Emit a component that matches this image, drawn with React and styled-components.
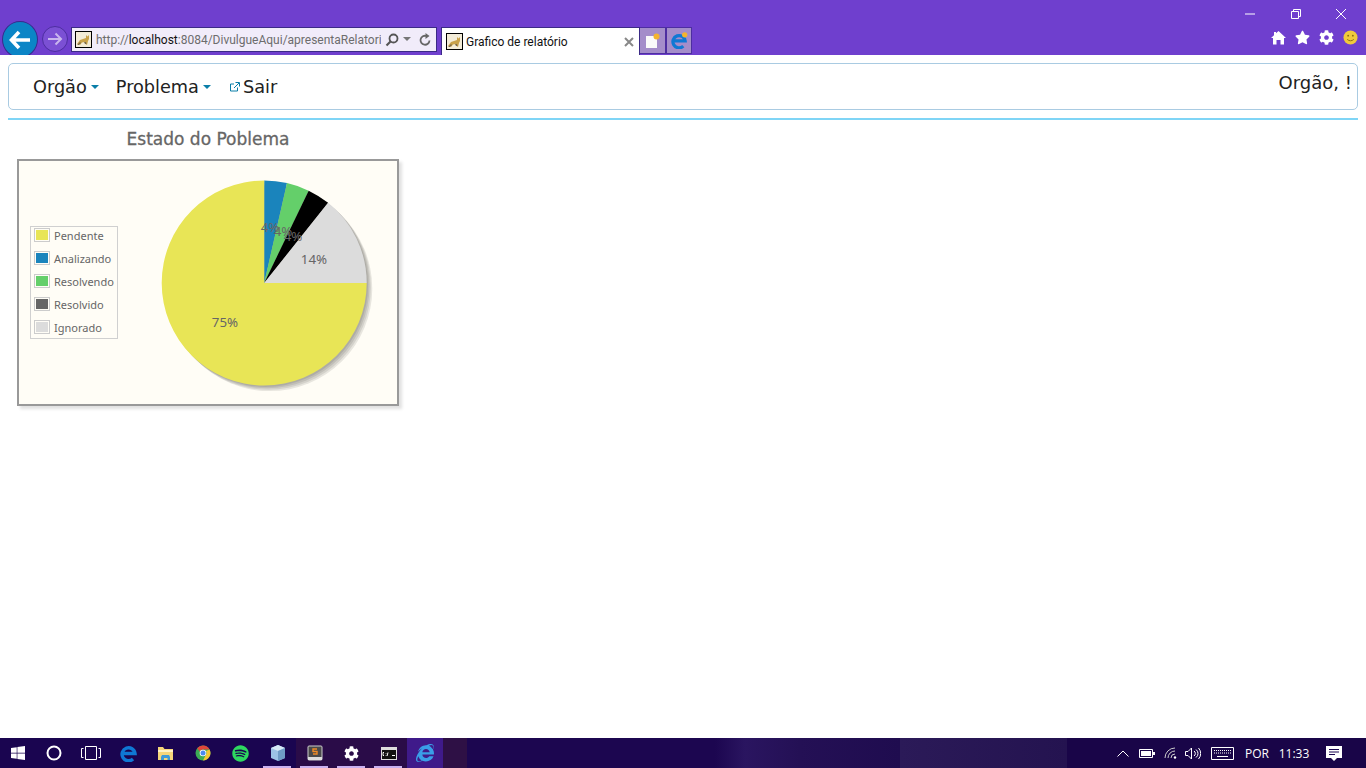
import React from 'react';
import styled, { createGlobalStyle } from 'styled-components';
import { FaCog, FaStar, FaSpotify, FaInternetExplorer, FaWindows } from 'react-icons/fa';

const GlobalStyle = createGlobalStyle`
  html, body { margin: 0; padding: 0; height: 100%; background: #fff; }
  body { font-family: "DejaVu Sans", sans-serif; overflow: hidden; }
`;

const Screen = styled.div`
  display: flex;
  flex-direction: column;
  height: 768px;
  width: 1366px;
  overflow: hidden;
`;

/* barra do navegador */
const BrowserBar = styled.header`
  display: flex;
  justify-content: space-between;
  height: 55px;
  flex: none;
  background: #6f3fce;
  overflow: hidden;
`;

const NavGroup = styled.div`
  display: flex;
  align-items: flex-start;
  padding: 21px 0 0 2px;
`;

const BackButton = styled.div`
  box-sizing: border-box;
  width: 36px;
  height: 37px;
  border-radius: 50%;
  background: #0b85c6;
  border: 1px solid #3a2a8c;
  display: flex;
  align-items: center;
  justify-content: center;
  flex: none;
`;

const ForwardButton = styled.div`
  box-sizing: border-box;
  width: 26px;
  height: 26px;
  margin: 5px 0 0 4px;
  border-radius: 50%;
  background: #7b50d4;
  border: 1px solid #4d2ea0;
  display: flex;
  align-items: center;
  justify-content: center;
  flex: none;
`;

const AddressBar = styled.div`
  box-sizing: border-box;
  display: flex;
  align-items: center;
  width: 366px;
  height: 25px;
  margin: 6px 0 0 3px;
  padding: 0 4px 0 3px;
  background: #f1ecfa;
  border: 1px solid #3b2a86;
  font: 12px Roboto, sans-serif;
  color: #6d6d6d;
  flex: none;
`;

const UrlText = styled.div`
  width: 285px;
  margin-left: 4px;
  white-space: nowrap;
  overflow: hidden;
  b { font-weight: 400; color: #111; }
`;

const AddressIcons = styled.div`
  display: flex;
  align-items: center;
  gap: 4px;
  margin-left: 4px;
`;

const Tab = styled.div`
  box-sizing: border-box;
  display: flex;
  align-items: center;
  width: 199px;
  height: 28px;
  margin: 6px 0 0 4px;
  padding: 0 5px 0 4px;
  background: #fff;
  border: 1px solid #3b2a86;
  border-bottom: 0;
  font: 12px Roboto, sans-serif;
  color: #111;
  flex: none;
`;

const TabTitle = styled.span`
  flex: 1;
  margin-left: 3px;
`;

const TabButton = styled.div`
  box-sizing: border-box;
  display: flex;
  align-items: center;
  justify-content: center;
  width: 26px;
  height: 27px;
  margin-top: 6px;
  background: #a48dca;
  border: 1px solid #4d2ea0;
  border-left: ${props => (props.$first ? '0' : '1px solid #4d2ea0')};
  flex: none;
`;

const RightGroup = styled.div`
  display: flex;
  flex-direction: column;
  align-items: flex-end;
`;

const WindowControls = styled.div`
  display: flex;
  height: 28px;
  align-items: center;
  margin-right: 2px;
`;

const WindowButton = styled.div`
  width: 45.500px;
  display: flex;
  justify-content: center;
`;

const ToolIcons = styled.div`
  display: flex;
  align-items: center;
  gap: 9px;
  padding: 2px 8px 0 0;
  color: #fff;
`;

/* pagina */
const Page = styled.main`
  flex: 1;
  padding: 8px 8px 0;
  background: #fff;
`;

const Navbar = styled.nav`
  box-sizing: border-box;
  display: flex;
  justify-content: space-between;
  height: 47px;
  padding: 0 5px 0 24px;
  border: 1px solid #a9cbe2;
  border-radius: 5px;
  color: #222;
  font-size: 18px;
`;

const Menu = styled.div`
  display: flex;
  align-items: center;
  gap: 17px;
  font-size: 17.700px;
`;

const MenuItem = styled.div`
  display: flex;
  align-items: center;
`;

const Caret = styled.span`
  width: 0;
  height: 0;
  margin-left: 4px;
  border-left: 4px solid transparent;
  border-right: 4px solid transparent;
  border-top: 4px solid #0a7ea8;
`;

const SairIcon = styled.span`
  display: flex;
  margin: 0 3px 0 2px;
`;

const Greeting = styled.div`
  padding-top: 8px;
`;

const Rule = styled.hr`
  height: 2px;
  margin: 8px 0 0;
  border: 0;
  background: #7fd5f6;
`;

const ChartBlock = styled.section`
  width: 382px;
  margin: 8px 0 0 9px;
`;

const ChartTitle = styled.h2`
  margin: 0 0 8px;
  height: 23px;
  line-height: 23px;
  text-align: center;
  font-size: 17px;
  font-weight: 400;
  color: #666;
  -webkit-text-stroke: 0.3px #666;
`;

const ChartFrame = styled.div`
  box-sizing: border-box;
  display: flex;
  align-items: center;
  gap: 31px;
  height: 247px;
  padding-left: 11px;
  background: #fffdf6;
  border: 2px solid #999;
  box-shadow: 3px 3px 3px rgba(0, 0, 0, 0.12);
`;

const Legend = styled.div`
  box-sizing: border-box;
  width: 88px;
  height: 113px;
  padding-left: 3px;
  border: 1px solid #d0d0d0;
  display: flex;
  flex-direction: column;
  gap: 7px;
`;

const LegendRow = styled.div`
  display: flex;
  align-items: center;
  gap: 4px;
  height: 16px;
  font: 11px "Noto Sans", sans-serif;
  color: #666;
  white-space: nowrap;
`;

const Swatch = styled.span`
  box-sizing: border-box;
  width: 16px;
  height: 14px;
  padding: 1px;
  border: 1px solid #ccc;
  display: block;
  flex: none;
  &::after {
    content: '';
    display: block;
    width: 100%;
    height: 100%;
    background: ${props => props.$color};
  }
`;

const PieLabel = styled.text`
  font: 13.300px "Noto Sans", sans-serif;
  fill: #666;
  text-anchor: middle;
`;

/* barra de tarefas */
const Taskbar = styled.footer`
  display: flex;
  justify-content: space-between;
  height: 30px;
  flex: none;
  color: #fff;
  background: linear-gradient(
    90deg,
    #1a0550 0 443px,
    #2e1045 443px 467px,
    #1c0650 467px 715px,
    #2a1560 745px,
    #241055 800px,
    #1f0c4f 900px,
    #2b1a58 900px,
    #241350 1067px,
    #190548 1067px
  );
`;

const Slots = styled.div`
  display: flex;
`;

const Slot = styled.div`
  box-sizing: border-box;
  display: flex;
  align-items: center;
  justify-content: center;
  width: ${props => props.$w || 37}px;
  height: 30px;
  background: ${props => (props.$active ? '#3f1a8a' : props.$dim ? '#2a0c48' : 'transparent')};
  position: relative;
  &::after {
    content: ${props => (props.$running ? "''" : 'none')};
    position: absolute;
    left: 4px;
    right: 5px;
    bottom: 0;
    height: 2px;
    background: #c9b0f0;
  }
`;

const Tray = styled.div`
  display: flex;
  align-items: center;
  font: 12px "Open Sans", sans-serif;
`;

const TrayItem = styled.div`
  display: flex;
  justify-content: center;
  align-items: center;
  width: ${props => props.$w}px;
`;

const slices = [
  { color: '#1a84bc', share: 1 },
  { color: '#64cf6a', share: 1 },
  { color: '#000000', share: 1 },
  { color: '#dcdcdc', share: 4 },
  { color: '#e8e556', share: 21 },
];

const legend = [
  ['Pendente', '#e8e556'],
  ['Analizando', '#1a84bc'],
  ['Resolvendo', '#64cf6a'],
  ['Resolvido', '#666666'],
  ['Ignorado', '#dcdcdc'],
];

const pieLabels = [
  ['4%', 121, 65],
  ['4%', 134, 69],
  ['4%', 144, 74],
  ['14%', 165, 97],
  ['75%', 76, 160],
];

const PIE_X = 115.200;
const PIE_Y = 116;
const PIE_R = 102.500;

const arcPath = (from, to) => {
  const point = (share) => {
    const a = (share / 28) * Math.PI * 2;
    return `${PIE_X + PIE_R * Math.sin(a)} ${PIE_Y - PIE_R * Math.cos(a)}`;
  };
  const large = to - from > 14 ? 1 : 0;
  return `M${PIE_X} ${PIE_Y}L${point(from)}A${PIE_R} ${PIE_R} 0 ${large} 1 ${point(to)}Z`;
};

const PieChart = () => {
  let start = 0;
  return (
    <svg width="230" height="232" viewBox="0 0 230 232">
      {[4, 3, 2, 1].map((k) => (
        <circle key={k} cx={PIE_X + k * 1.4} cy={PIE_Y + k * 1.4} r={PIE_R} fill="#000" opacity="0.09" />
      ))}
      {slices.map((s) => {
        const d = arcPath(start, start + s.share);
        start += s.share;
        return <path key={s.color} d={d} fill={s.color} />;
      })}
      {pieLabels.map(([t, x, y]) => (
        <PieLabel key={x} x={x} y={y}>{t}</PieLabel>
      ))}
    </svg>
  );
};

const Tomcat = () => (
  <svg width="17" height="17" viewBox="0 0 17 17">
    <rect x="0.5" y="0.5" width="16" height="16" fill="#f3ecd8" stroke="#000" />
    <path d="M2 13l3-4 3-1 3-1V4l1.500 1.500L14 4v4l-1 2-1 4-1.500-1-.5-2-3 .5L5 14l-1-1z" fill="#c9a24a" />
    <path d="M2 14l3-3 1 1-2 2zM9 11l2 0 .5 2-1.500 0z" fill="#7a6a4a" />
  </svg>
);

const EdgeLogo = ({ size, badge }) => (
  <svg width={size} height={size} viewBox="0 0 18 18">
    <path d="M2.500 9.500h12.500A6.500 6.500 0 1 0 13 15" stroke="#0f78d4" strokeWidth="3.400" fill="none" />
    {badge && <circle cx="14.500" cy="3" r="2.800" fill="#f4b32e" />}
  </svg>
);

const ChromeLogo = () => (
  <svg width="16" height="16" viewBox="0 0 16 16">
    <circle cx="8" cy="8" r="7.500" fill="#3cab54" />
    <path d="M8 .5A7.500 7.500 0 0 1 14.600 4.500H8A3.500 3.500 0 0 0 4.800 6.500L2.200 3.200A7.500 7.500 0 0 1 8 .5z" fill="#e0463a" />
    <path d="M14.600 4.500A7.500 7.500 0 0 1 8 15.500L10.800 10A3.500 3.500 0 0 0 11 6z" fill="#f6c533" />
    <circle cx="8" cy="8" r="3.300" fill="#fff" />
    <circle cx="8" cy="8" r="2.500" fill="#4a8af0" />
  </svg>
);

const Folder = () => (
  <svg width="17" height="16" viewBox="0 0 17 16">
    <path d="M1 2h5l1.500 2H16v11H1z" fill="#f5d67a" />
    <path d="M1 5h15v2H1z" fill="#fff3c4" />
    <path d="M5 10h7l1 2v3h-2.500v-2h-3.500v2H4v-3z" fill="#3d9ad8" />
  </svg>
);

const Cube = () => (
  <svg width="16" height="18" viewBox="0 0 16 18">
    <path d="M8 1l7 3v10l-7 3-7-3V4z" fill="#9cc3e6" />
    <path d="M8 1l7 3-7 3-7-3z" fill="#d6e8f6" />
    <path d="M8 7l7-3v10l-7 3z" fill="#6f9cc6" />
  </svg>
);

const Sublime = () => (
  <svg width="16" height="16" viewBox="0 0 16 16">
    <rect x="1" y="1" width="14" height="14" rx="1" fill="#4a4a4a" stroke="#ccc" />
    <rect x="1" y="12" width="14" height="3" fill="#ddd" />
    <path d="M10 4H6v2.500h4V9H6" fill="none" stroke="#f08a24" strokeWidth="1.400" />
  </svg>
);

const Cmd = () => (
  <svg width="16" height="13" viewBox="0 0 16 13">
    <rect x="0.5" y="0.5" width="15" height="12" fill="#111" stroke="#ddd" />
    <rect x="1" y="1" width="14" height="2" fill="#ddd" />
    <path d="M3 5.500H2v3h1M5 6v.500M5 8v.500M7 5.500l-1 3.500M11 8.500h3" stroke="#fff" fill="none" />
  </svg>
);

const Smile = () => (
  <svg width="15" height="15" viewBox="0 0 16 16">
    <circle cx="8" cy="8" r="7.500" fill="#f0c93c" />
    <circle cx="5.500" cy="6" r="1" fill="#8a6d10" />
    <circle cx="10.500" cy="6" r="1" fill="#8a6d10" />
    <path d="M4.500 10c2 2 5 2 7 0" stroke="#8a6d10" fill="none" />
  </svg>
);

const App = () => (
  <Screen>
    <GlobalStyle />
    <BrowserBar>
      <NavGroup>
        <BackButton>
          <svg width="22" height="20" viewBox="0 0 22 20">
            <path d="M10 2L2.500 10l7.500 8M3 10h18" stroke="#fff" strokeWidth="3.600" fill="none" />
          </svg>
        </BackButton>
        <ForwardButton>
          <svg width="16" height="14" viewBox="0 0 16 14">
            <path d="M8.500 1.500L14 7l-5.500 5.500M14 7H1" stroke="#c9b6ee" strokeWidth="2" fill="none" />
          </svg>
        </ForwardButton>
        <AddressBar>
          <Tomcat />
          <UrlText>http://<b>localhost</b>:8084/DivulgueAqui/apresentaRelatorio</UrlText>
          <AddressIcons>
            <svg width="14" height="14" viewBox="0 0 14 14">
              <circle cx="8.500" cy="5.500" r="4" stroke="#555" strokeWidth="1.800" fill="none" />
              <path d="M5.500 8.500L1.500 12.500" stroke="#555" strokeWidth="2.200" />
            </svg>
            <svg width="8" height="5" viewBox="0 0 8 5"><path d="M0 0h8L4 4z" fill="#777" /></svg>
            <svg width="14" height="14" viewBox="0 0 14 14" style={{ marginLeft: 3 }}>
              <path d="M11.500 7.500A4.500 4.500 0 1 1 8.500 3" stroke="#666" strokeWidth="1.800" fill="none" />
              <path d="M7.500 0l4 3-4 3z" fill="#666" />
            </svg>
          </AddressIcons>
        </AddressBar>
        <Tab>
          <Tomcat />
          <TabTitle>Grafico de relatório</TabTitle>
          <svg width="10" height="10" viewBox="0 0 10 10">
            <path d="M1 1l8 8M9 1l-8 8" stroke="#888" strokeWidth="2" />
          </svg>
        </Tab>
        <TabButton $first>
          <svg width="15" height="16" viewBox="0 0 15 16">
            <path d="M1 3h9l2 2v10H1z" fill="#fafafa" />
            <circle cx="11.500" cy="3.500" r="3" fill="#f4b32e" />
          </svg>
        </TabButton>
        <TabButton>
          <EdgeLogo size={17} badge />
        </TabButton>
      </NavGroup>
      <RightGroup>
        <WindowControls>
          <WindowButton>
            <svg width="10" height="10" viewBox="0 0 10 10"><path d="M0 5h10" stroke="#fff" /></svg>
          </WindowButton>
          <WindowButton>
            <svg width="10" height="10" viewBox="0 0 10 10">
              <path d="M.5 2.500h7v7h-7zM2.500 2.500v-2h7v7h-2" stroke="#fff" fill="none" />
            </svg>
          </WindowButton>
          <WindowButton>
            <svg width="10" height="10" viewBox="0 0 10 10"><path d="M0 0l10 10M10 0L0 10" stroke="#fff" /></svg>
          </WindowButton>
        </WindowControls>
        <ToolIcons>
          <svg width="15" height="15" viewBox="0 0 15 15">
            <path d="M7.500 1L15 8h-2v6.500H9.500v-4.500h-4v4.500H2V8H0l3-2.800V2h2v1.300z" fill="#fff" />
          </svg>
          <FaStar size={15} />
          <FaCog size={15} />
          <Smile />
        </ToolIcons>
      </RightGroup>
    </BrowserBar>

    <Page>
      <Navbar>
        <Menu>
          <MenuItem>Orgão<Caret /></MenuItem>
          <MenuItem>Problema<Caret /></MenuItem>
          <MenuItem>
            <SairIcon>
              <svg width="10" height="10" viewBox="0 0 10 10">
                <path d="M7.500 5.500v3.500H.5V2h3.500M4 6l5-5M5.500 .5h4v4" stroke="#0a7ea8" fill="none" />
              </svg>
            </SairIcon>
            Sair
          </MenuItem>
        </Menu>
        <Greeting>Orgão, !</Greeting>
      </Navbar>
      <Rule />
      <ChartBlock>
        <ChartTitle>Estado do Poblema</ChartTitle>
        <ChartFrame>
          <Legend>
            {legend.map(([name, color]) => (
              <LegendRow key={name}>
                <Swatch $color={color} />
                {name}
              </LegendRow>
            ))}
          </Legend>
          <PieChart />
        </ChartFrame>
      </ChartBlock>
    </Page>

    <Taskbar>
      <Slots>
        <Slot $w={36}><FaWindows size={16} /></Slot>
        <Slot $w={36}>
          <svg width="16" height="16" viewBox="0 0 16 16"><circle cx="8" cy="8" r="6.500" stroke="#fff" strokeWidth="2" fill="none" /></svg>
        </Slot>
        <Slot $w={38}>
          <svg width="20" height="14" viewBox="0 0 20 14">
            <path d="M4.500.5h11v13h-11zM2.500 2.500H.5v9h2M17.500 2.500h2v9h-2" stroke="#fff" fill="none" />
          </svg>
        </Slot>
        <Slot><EdgeLogo size={18} /></Slot>
        <Slot><Folder /></Slot>
        <Slot><ChromeLogo /></Slot>
        <Slot $w={38}><FaSpotify size={17} color="#2ed760" /></Slot>
        <Slot $running><Cube /></Slot>
        <Slot $running $dim><Sublime /></Slot>
        <Slot $running $dim><FaCog size={15} /></Slot>
        <Slot $running $dim><Cmd /></Slot>
        <Slot $w={36} $active><FaInternetExplorer size={18} color="#3a9ee8" /></Slot>
      </Slots>
      <Tray>
        <TrayItem $w={24}>
          <svg width="12" height="7" viewBox="0 0 12 7"><path d="M.5 6.500L6 1l5.500 5.500" stroke="#fff" fill="none" /></svg>
        </TrayItem>
        <TrayItem $w={24}>
          <svg width="16" height="9" viewBox="0 0 16 9">
            <path d="M.5 .5h13v8H.5z" stroke="#fff" fill="none" />
            <path d="M2 2h10v5H2zM14 3h2v3h-2z" fill="#fff" />
          </svg>
        </TrayItem>
        <TrayItem $w={24}>
          <svg width="14" height="12" viewBox="0 0 14 12">
            <path d="M1 11a10 10 0 0 1 10-10M4 11a7 7 0 0 1 7-7M7 11a4 4 0 0 1 4-4" stroke="#ccc" fill="none" />
            <circle cx="11" cy="10.500" r="1.200" fill="#fff" />
          </svg>
        </TrayItem>
        <TrayItem $w={20}>
          <svg width="16" height="13" viewBox="0 0 16 13">
            <path d="M.5 4.500h2.500L6.500 1v11L3 8.500H.5zM9 4a3 3 0 0 1 0 5M11 2.500a5 5 0 0 1 0 8M13.500 1a8 8 0 0 1 0 11" stroke="#fff" fill="none" />
          </svg>
        </TrayItem>
        <TrayItem $w={38}>
          <svg width="23" height="13" viewBox="0 0 23 13">
            <path d="M.5 .5h22v12H.5z" stroke="#fff" fill="none" />
            <path d="M3 3.500h17M3 6h17" stroke="#fff" strokeDasharray="1 1" />
            <path d="M6 9.500h11" stroke="#fff" />
          </svg>
        </TrayItem>
        <TrayItem $w={32}>POR</TrayItem>
        <TrayItem $w={42}>11:33</TrayItem>
        <TrayItem $w={38}>
          <svg width="16" height="15" viewBox="0 0 16 15">
            <path d="M0 0h16v12h-5l-3 3-3-3H0z" fill="#fff" />
            <path d="M3 3.500h10M3 6h10M3 8.500h6" stroke="#1a0550" />
          </svg>
        </TrayItem>
        <TrayItem $w={13} />
      </Tray>
    </Taskbar>
  </Screen>
);

export default App;
